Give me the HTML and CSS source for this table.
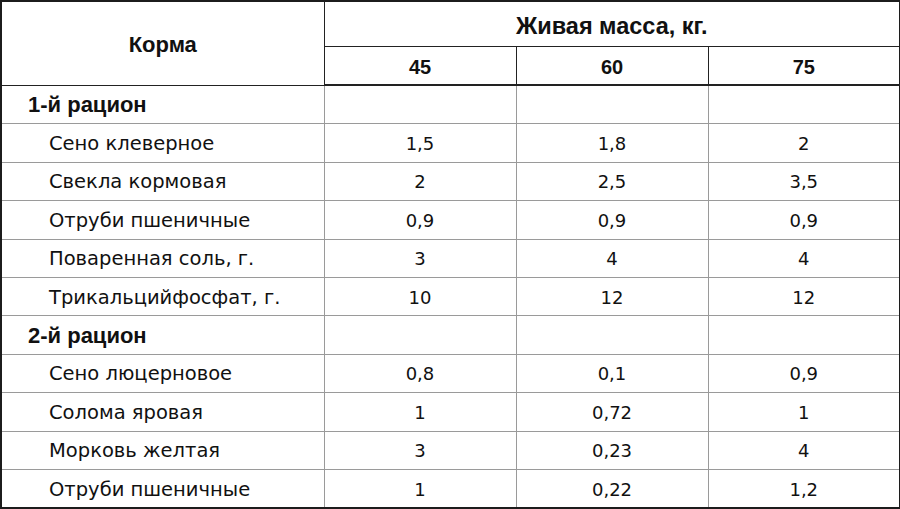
FILE: index.html
```html
<!DOCTYPE html>
<html lang="ru">
<head>
<meta charset="utf-8">
<link rel="stylesheet" href="styles.css">
</head>
<body>
<table class="feed">
  <colgroup>
    <col class="c-name">
    <col class="c-val">
    <col class="c-val">
    <col class="c-val">
  </colgroup>
  <thead>
    <tr class="h1">
      <th rowspan="2" class="th-name">Корма</th>
      <th colspan="3" class="th-mass">Живая масса, кг.</th>
    </tr>
    <tr class="h2">
      <th>45</th>
      <th>60</th>
      <th>75</th>
    </tr>
  </thead>
  <tbody>
    <tr class="sec"><td class="name">1-й рацион</td><td></td><td></td><td></td></tr>
    <tr><td class="name item">Сено клеверное</td><td>1,5</td><td>1,8</td><td>2</td></tr>
    <tr><td class="name item">Свекла кормовая</td><td>2</td><td>2,5</td><td>3,5</td></tr>
    <tr><td class="name item">Отруби пшеничные</td><td>0,9</td><td>0,9</td><td>0,9</td></tr>
    <tr><td class="name item">Поваренная соль, г.</td><td>3</td><td>4</td><td>4</td></tr>
    <tr><td class="name item">Трикальцийфосфат, г.</td><td>10</td><td>12</td><td>12</td></tr>
    <tr class="sec"><td class="name">2-й рацион</td><td></td><td></td><td></td></tr>
    <tr><td class="name item">Сено люцерновое</td><td>0,8</td><td>0,1</td><td>0,9</td></tr>
    <tr><td class="name item">Солома яровая</td><td>1</td><td>0,72</td><td>1</td></tr>
    <tr><td class="name item">Морковь желтая</td><td>3</td><td>0,23</td><td>4</td></tr>
    <tr><td class="name item">Отруби пшеничные</td><td>1</td><td>0,22</td><td>1,2</td></tr>
  </tbody>
</table>
</body>
</html>
```
FILE: styles.css
```css
html, body {
  margin: 0;
  padding: 0;
  background: #ffffff;
}
.feed {
  border-collapse: collapse;
  table-layout: fixed;
  width: 900px;
  border: 2px solid #1c1c1c;
  color: #111;
}
.c-name { width: 323px; }
.c-val { width: 192px; }
.feed th {
  font-family: "Liberation Sans", Arial, sans-serif;
  font-weight: bold;
  font-size: 20px;
  line-height: 20px;
  border: 1px solid #222;
  padding: 0;
  text-align: center;
}
.feed th.th-name { font-size: 22px; padding-top: 4px; }
.feed th.th-mass { font-size: 23.5px; padding-top: 3px; }
.h1 th { height: 41px; }
.h2 th { height: 35px; border-bottom: 2px solid #222; padding-top: 2px; }
.th-name { border-bottom: 2px solid #222; }
.feed td {
  font-family: "DejaVu Sans", Verdana, sans-serif;
  font-size: 18px;
  line-height: 20px;
  height: 35.4px;
  padding: 2px 0 0 0;
  border: 1px solid #9a9a9a;
  text-align: center;
}
.feed td.name {
  font-size: 19.5px;
  text-align: left;
  padding-left: 26px;
  border-right: 1px solid #9a9a9a;
}
.feed td.item {
  padding-left: 47px;
}
.sec td.name {
  font-family: "Liberation Sans", Arial, sans-serif;
  font-weight: bold;
  font-size: 22px;
}
```
